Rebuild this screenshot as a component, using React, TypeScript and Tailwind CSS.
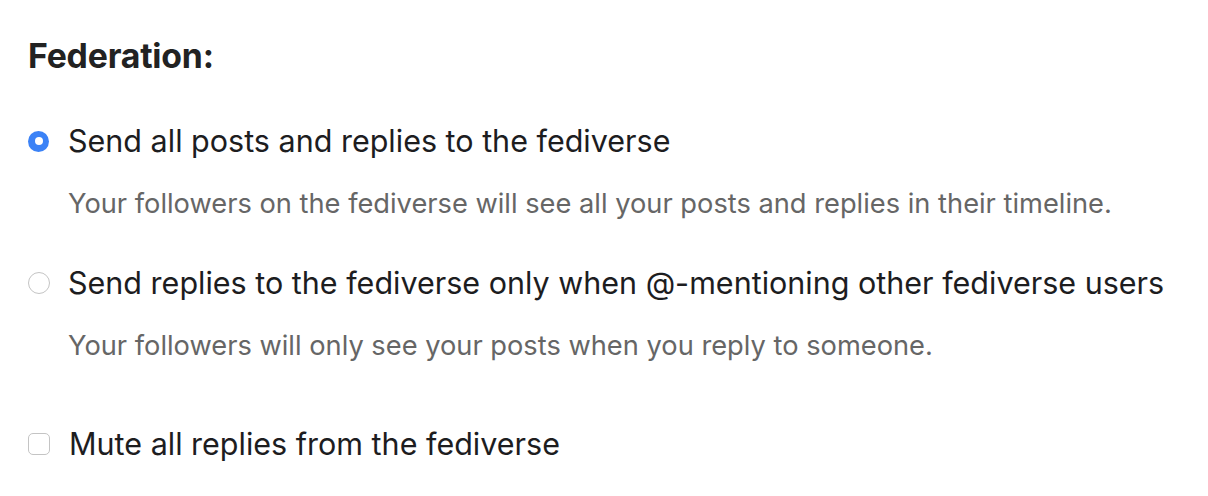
import React from "react"

const Radio = ({ checked }: { checked: boolean }) =>
  checked ? (
    <span className="flex h-[21px] w-[21px] shrink-0 items-center justify-center rounded-full bg-[#3b82f6]">
      <span className="h-[8px] w-[8px] rounded-full bg-white" />
    </span>
  ) : (
    <span className="h-[22px] w-[22px] shrink-0 rounded-full border border-[#c4c4c4] bg-white" />
  )

export default function App() {
  return (
    <div className="min-h-[496px] w-[1208px] bg-white pl-[28px] pt-[36px] font-['Inter',sans-serif] text-[#222]">
      <h2 className="text-[33.8px] font-bold leading-[40px] tracking-[-0.2px]">Federation:</h2>

      <div className="mt-[45px] flex items-center gap-[19px]">
        <Radio checked />
        <span className="text-[30.5px] leading-[40px] text-[#1d1d1f]">Send all posts and replies to the fediverse</span>
      </div>
      <p className="mt-[27px] pl-[40px] text-[27.25px] leading-[32px] text-[#666]">
        Your followers on the fediverse will see all your posts and replies in their timeline.
      </p>

      <div className="mt-[43px] flex items-center gap-[18px]">
        <Radio checked={false} />
        <span className="text-[30.5px] leading-[40px] text-[#1d1d1f]">
          Send replies to the fediverse only when @-mentioning other fediverse users
        </span>
      </div>
      <p className="mt-[27px] pl-[40px] text-[27.25px] leading-[32px] text-[#666]">
        Your followers will only see your posts when you reply to someone.
      </p>

      <div className="mt-[62px] flex items-center gap-[19px]">
        <span className="h-[22px] w-[22px] shrink-0 rounded-[5px] border border-[#c4c4c4] bg-white" />
        <span className="text-[30.5px] leading-[40px] text-[#1d1d1f]">Mute all replies from the fediverse</span>
      </div>
    </div>
  )
}
